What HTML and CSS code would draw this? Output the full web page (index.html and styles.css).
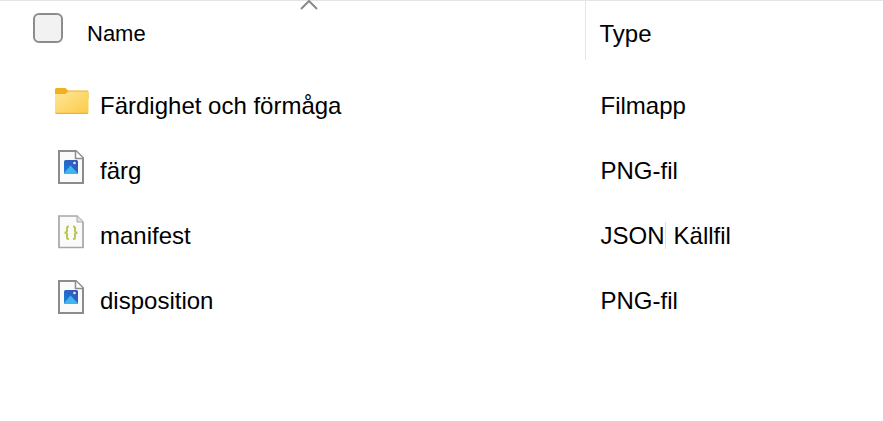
FILE: index.html
```html
<!DOCTYPE html>
<html lang="sv">
<head>
<meta charset="utf-8">
<title>Filer</title>
<link rel="stylesheet" href="styles.css">
</head>
<body>
<svg class="defs" aria-hidden="true">
  <defs>
    <linearGradient id="folder-fill" x1="0" y1="0" x2="1" y2="1">
      <stop offset="0" stop-color="#ffe69a"/>
      <stop offset="1" stop-color="#fccb45"/>
    </linearGradient>
    <linearGradient id="photo-fill" x1="0" y1="1" x2="1" y2="0">
      <stop offset="0" stop-color="#1683dc"/>
      <stop offset="1" stop-color="#3b4bb4"/>
    </linearGradient>
    <symbol id="image-file" viewBox="-2 0 34 35">
      <path d="M2 2H19L26 9V34H2Z" fill="#fafafa" stroke="#8c8c8c" stroke-width="2"/>
      <path d="M18.500 2V9.500H26" fill="#fff" stroke="#8c8c8c" stroke-width="1.500"/>
      <rect x="7" y="11" width="14" height="14" rx="1.500" fill="url(#photo-fill)"/>
      <path d="M7.500 23.500L13.500 16.500L20.500 24Q20 25 19 25H9Q7.500 25 7.500 23.500Z" fill="#3fb4f0"/>
      <circle cx="17.500" cy="14" r="1.300" fill="#d8f1ff"/>
    </symbol>
  </defs>
</svg>
<main class="files">
  <svg class="sort" viewBox="0 0 20 11" aria-hidden="true"><path d="M2 9L10 1L18 9" fill="none" stroke="#8a8a8a" stroke-width="2"/></svg>
  <table class="list">
    <thead>
      <tr>
        <th class="name" scope="col">
          <div class="heading">
            <input class="check" type="checkbox" id="all" aria-label="Name">
            <label class="title" for="all">Name</label>
          </div>
        </th>
        <th class="type" scope="col">Type</th>
      </tr>
    </thead>
    <tbody>
      <tr>
        <td><div class="entry">
          <svg class="icon" viewBox="0 0 34 35" aria-hidden="true">
            <path d="M0 5.500Q0 4 1.500 4H10.500L13 6.500H32Q33.500 6.500 33.500 8V15H0Z" fill="#f2b01e"/>
            <path d="M0 10H10.500L13 7.500H32Q33.500 7.500 33.500 9V28.500Q33.500 30 32 30H1.500Q0 30 0 28.500Z" fill="url(#folder-fill)"/>
            <path d="M.5 29.300H33" stroke="#edb03b" stroke-width="1.200"/>
          </svg>
          <span>Färdighet och förmåga</span></div></td>
        <td class="kind">Filmapp</td>
      </tr>
      <tr>
        <td><div class="entry"><svg class="icon" aria-hidden="true"><use href="#image-file"/></svg><span>färg</span></div></td>
        <td class="kind">PNG-fil</td>
      </tr>
      <tr>
        <td><div class="entry">
          <svg class="icon" viewBox="-2 0 34 35" aria-hidden="true">
            <path d="M2 2H20L26 8V33.500H2Z" fill="#fafafa" stroke="#a6a6a6" stroke-width="1.700"/>
            <path d="M20 2V8H26" fill="#e2e2e2" stroke="#a6a6a6"/>
            <path d="M12 12.500H11.500Q10 12.500 10 14V17Q10 18.800 7.500 18.800Q10 18.800 10 20.500V23.500Q10 25 11.500 25H12M16 12.500H16.500Q18 12.500 18 14V17Q18 18.800 20.500 18.800Q18 18.800 18 20.500V23.500Q18 25 16.500 25H16" fill="none" stroke="#bcc650" stroke-width="2"/>
          </svg>
          <span>manifest</span></div></td>
        <td class="kind"><span class="format">JSON</span>Källfil</td>
      </tr>
      <tr>
        <td><div class="entry"><svg class="icon" aria-hidden="true"><use href="#image-file"/></svg><span>disposition</span></div></td>
        <td class="kind">PNG-fil</td>
      </tr>
    </tbody>
  </table>
</main>
</body>
</html>
```
FILE: styles.css
```css
* {
  box-sizing: border-box;
}

body {
  margin: 0;
  background: #fff;
  color: #000;
  font: 24px/28px "Liberation Sans", Arial, sans-serif;
}

.defs {
  position: absolute;
  width: 0;
  height: 0;
}

.files {
  position: relative;
  border-top: 1px solid #e5e5e5;
}

.sort {
  position: absolute;
  top: -1px;
  left: 35%;
  width: 20px;
  height: 11px;
  transform: translateX(-50%);
}

.list {
  width: 100%;
  table-layout: fixed;
  border-collapse: separate;
  border-spacing: 0;
}

th,
td {
  padding: 0;
  font-weight: normal;
  text-align: left;
}

th {
  height: 59px;
  vertical-align: top;
}

.name {
  width: 66.2%;
}

.heading {
  display: flex;
  gap: 24px;
  padding: 12px 0 0 33px;
}

.check {
  appearance: none;
  flex: none;
  width: 30px;
  height: 30px;
  margin: 0;
  border: 2px solid #8c8c8c;
  border-radius: 6px;
  background: #f2f2f2;
}

.title {
  padding-top: 7px;
  font-size: 22px;
}

.type {
  padding: 19px 0 0 14px;
  border-left: 1px solid #e5e5e5;
}

tbody::before {
  display: block;
  height: 13px;
  content: "";
}

td {
  height: 65px;
}

.entry {
  display: flex;
  align-items: center;
  gap: 11px;
  padding-left: 55px;
}

.icon {
  flex: none;
  width: 34px;
  height: 35px;
  margin-bottom: 8px;
}

.kind {
  padding-left: 16px;
}

.format {
  margin-right: 8px;
  border-right: 1px solid #cfe6f7;
}
```
